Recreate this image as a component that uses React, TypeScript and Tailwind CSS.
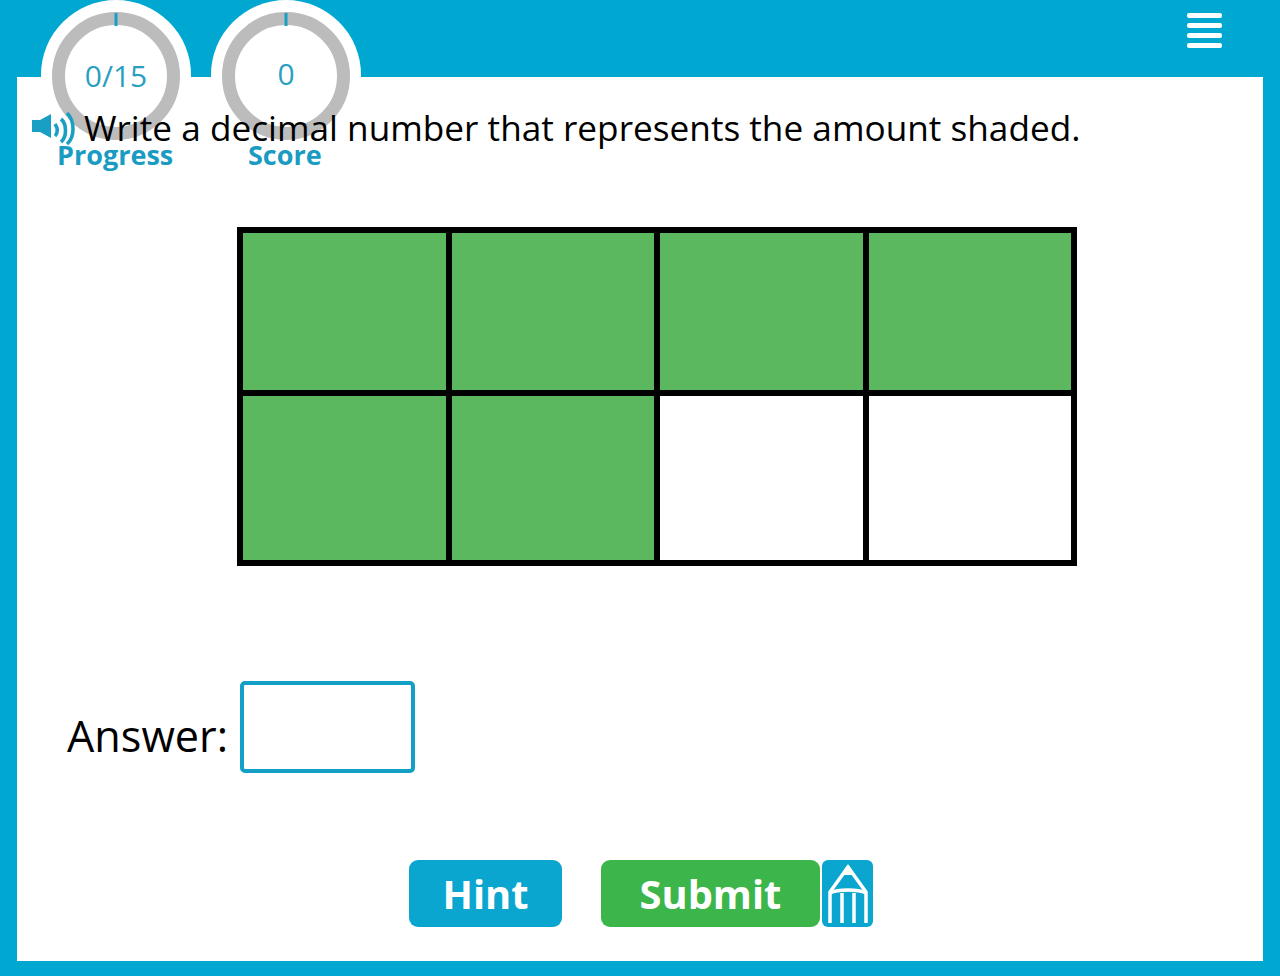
const Gauge = ({ value, label, left, labelClass, valueClass }: { value: string; label: string; left: string; labelClass: string; valueClass: string }) => (
  <div className={`absolute top-0 ${left} w-[150px] h-[170px]`}>
    <div className="w-[150px] h-[150px] rounded-full bg-white" />
    <svg className="absolute left-[11px] top-[12px]" width="128" height="128" viewBox="0 0 128 128">
      <circle cx="64" cy="64" r="57.5" fill="none" stroke="#bcbcbc" strokeWidth="13" />
      <rect x="62.5" y="1" width="3" height="13" fill="#1a9fc4" />
    </svg>
    <div className={`absolute inset-x-0 text-center text-[30px] leading-none text-[#2a9fc0] ${valueClass}`}>{value}</div>
    <div className={`absolute text-center text-[27px] leading-none font-bold text-[#1a9bc2] whitespace-nowrap ${labelClass}`}>{label}</div>
  </div>
);

export default function App() {
  return (
    <div className="relative w-[1280px] h-[979px] bg-white overflow-hidden font-['Open_Sans',sans-serif]">
      <div className="h-[976px] bg-[#00a8d1] px-[17px] pb-[15px] flex flex-col">
        <div className="h-[77px] shrink-0 flex justify-end pr-[41px] pt-[13px]">
          <div className="w-[35px] flex flex-col gap-[5px]">
            <div className="h-[5px] rounded-[2px] bg-white" />
            <div className="h-[5px] rounded-[2px] bg-white" />
            <div className="h-[5px] rounded-[2px] bg-white" />
            <div className="h-[5px] rounded-[2px] bg-white" />
          </div>
        </div>

        <div className="flex-1 bg-white flex flex-col">
          <Gauge value="0/15" label="Progress" left="left-[41px]" valueClass="top-[61px]" labelClass="left-[16px] top-[141px]" />
          <Gauge value="0" label="Score" left="left-[211px]" valueClass="top-[59px]" labelClass="left-[37px] top-[141px]" />

          <div className="relative z-10 h-[150px] pl-[67px] pt-[27px]">
            <p className="text-[35.2px] leading-[47px] text-black whitespace-nowrap">
              Write a decimal number that represents the amount shaded.
            </p>
          </div>

          <div className="ml-[220px] w-[840px] h-[339px] bg-black p-[6px] flex flex-col gap-[6px]">
            <div className="h-[157px] flex gap-[6px]">
              <div className="w-[203px] bg-[#5cb85f]" />
              <div className="w-[202px] bg-[#5cb85f]" />
              <div className="w-[203px] bg-[#5cb85f]" />
              <div className="flex-1 bg-[#5cb85f]" />
            </div>
            <div className="flex-1 flex gap-[6px]">
              <div className="w-[203px] bg-[#5cb85f]" />
              <div className="w-[202px] bg-[#5cb85f]" />
              <div className="w-[203px] bg-white" />
              <div className="flex-1 bg-white" />
            </div>
          </div>

          <div className="mt-[115px] pl-[50px] flex items-center gap-[12px]">
            <span className="pt-[18px] text-[43.2px] leading-[60px] text-black">Answer:</span>
            <div className="w-[175px] h-[92px] border-[4px] border-[#149fc6] rounded-[5px] bg-white" />
          </div>

          <div className="mt-[87px] pl-[392px] flex">
            <button className="w-[153px] h-[67px] rounded-[9px] bg-[#0ba6d0] text-white text-[39.8px] font-bold">Hint</button>
            <button className="ml-[39px] w-[219px] h-[67px] rounded-[9px] bg-[#3cb54a] text-white text-[39.8px] font-bold">Submit</button>
            <div className="ml-[2px] w-[51px] h-[67px] rounded-[6px] bg-[#0ba6d0] flex items-center justify-center">
              <svg width="51" height="67" viewBox="0 0 51 67" fill="none" stroke="#ffffff" strokeWidth="3.5">
                <path d="M8 63V32L26 7L44 32V63" strokeLinejoin="round" />
                <path d="M8 33C16 29 36 29 44 33" />
                <path d="M20 33V63M32 33V63" />
                <path d="M26 4L19 15H33Z" fill="#ffffff" stroke="none" />
              </svg>
            </div>
          </div>
        </div>
      </div>

      <svg className="absolute left-[31px] top-[111px] z-10" width="45" height="35" viewBox="0 0 45 35" fill="none">
        <path d="M1 9H9L20 3V27L9 21H1Z" fill="#1a9fc4" />
        <path d="M24 13C27 17 27 22 24 25M30 8C36 13 36 26 30 31M36 2C44 10 44 26 36 33" stroke="#1a9fc4" strokeWidth="3.6" />
      </svg>
    </div>
  );
}
